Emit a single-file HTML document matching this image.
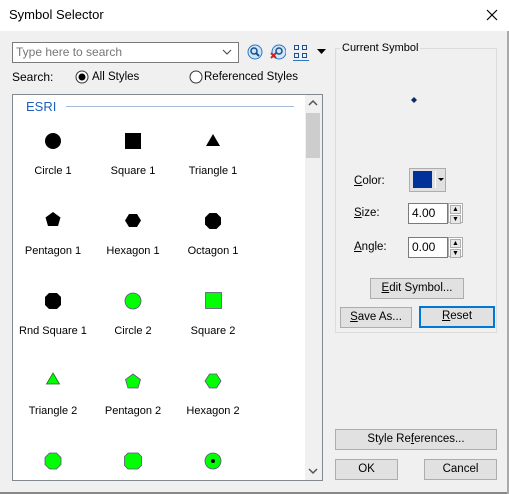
<!DOCTYPE html><html><head><style>
body{margin:0;width:509px;height:494px;background:#f0f0f0;font-family:"Liberation Sans",sans-serif;font-size:11px;color:#000;position:relative;overflow:hidden}
.a{position:absolute}
.btn{position:absolute;background:#e1e1e1;border:1px solid #adadad;box-sizing:border-box;text-align:center;line-height:18px;font-size:11.5px}
.lbl{position:absolute;width:80px;text-align:center;font-size:11px;color:#000}
.inp{position:absolute;background:#fff;border:1px solid #7a7a7a;box-sizing:border-box;padding-left:3px;line-height:18px;font-size:12px}
.spin{position:absolute;width:15px;height:20px;box-sizing:border-box}
.spin div{height:8px;border:1px solid #adadad;background:#e8e8e8;margin-bottom:1px;font-size:7px;line-height:8px;text-align:center}
</style></head><body>
<div class="a" style="left:0;top:0;width:509px;height:31px;background:#fff"></div>
<div class="a" style="left:9px;top:7px;font-size:13px">Symbol Selector</div>
<svg class="a" style="left:486px;top:9px" width="12" height="12"><path d="M1 1L11 11M11 1L1 11" stroke="#000" stroke-width="1.2"/></svg>
<div class="a" style="left:0;top:492px;width:509px;height:2px;background:#888"></div>
<div class="a" style="left:507px;top:31px;width:2px;height:463px;background:#aaa"></div>

<div class="inp" style="left:12px;top:42px;width:227px;height:21px;color:#777;line-height:18px">Type here to search</div>
<svg class="a" style="left:222px;top:48px" width="10" height="8"><path d="M1 2L5 6L9 2" stroke="#444" fill="none"/></svg>
<svg class="a" style="left:247px;top:44px" width="16" height="16"><circle cx="8" cy="8" r="7" fill="#cfe6f8" stroke="#2a77c0"/><circle cx="7" cy="7" r="3" fill="none" stroke="#1b4f8f" stroke-width="1.5"/><path d="M9 9L12 12" stroke="#1b4f8f" stroke-width="2"/></svg>
<svg class="a" style="left:270px;top:44px" width="16" height="16"><circle cx="9" cy="8" r="7" fill="#cfe6f8" stroke="#2a77c0"/><circle cx="9" cy="7" r="3" fill="none" stroke="#1b4f8f" stroke-width="1.5"/><path d="M1 9L6 14M6 9L1 14" stroke="#d02020" stroke-width="2"/></svg>
<svg class="a" style="left:293px;top:44px" width="18" height="18"><g fill="none" stroke="#1b4f8f"><rect x="1.5" y="1.5" width="4" height="4"/><rect x="9.5" y="1.5" width="4" height="4"/><rect x="1.5" y="9.5" width="4" height="4"/><rect x="9.5" y="9.5" width="4" height="4"/></g><path d="M0 16.5H16" stroke="#2a77c0"/></svg>
<svg class="a" style="left:317px;top:49px" width="9" height="6"><path d="M0 0H9L4.5 5Z" fill="#000"/></svg>

<div class="a" style="left:12px;top:70px;font-size:12px">Search:</div>
<svg class="a" style="left:75px;top:70px" width="14" height="14"><circle cx="7" cy="7" r="6" fill="#fff" stroke="#333"/><circle cx="7" cy="7" r="3.5" fill="#000"/></svg>
<div class="a" style="left:92px;top:71px;font-size:11.5px">All Styles</div>
<svg class="a" style="left:189px;top:70px" width="14" height="14"><circle cx="7" cy="7" r="6" fill="#fff" stroke="#333"/></svg>
<div class="a" style="left:204px;top:71px;font-size:11.5px">Referenced Styles</div>

<div class="a" style="left:12px;top:94px;width:311px;height:387px;background:#fff;border:1px solid #828790;box-sizing:border-box"></div>
<div class="a" style="left:305px;top:95px;width:17px;height:385px;background:#f0f0f0"></div>
<div class="a" style="left:306px;top:113px;width:14px;height:45px;background:#cdcdcd"></div>
<svg class="a" style="left:308px;top:99px" width="10" height="8"><path d="M1 6L5 2L9 6" stroke="#555" fill="none" stroke-width="1.5"/></svg>
<svg class="a" style="left:308px;top:467px" width="10" height="8"><path d="M1 2L5 6L9 2" stroke="#555" fill="none" stroke-width="1.5"/></svg>
<div class="a" style="left:26px;top:99px;color:#1f5fbf;font-size:13px">ESRI</div>
<div class="a" style="left:66px;top:106px;width:228px;height:1px;background:#a5bcd8"></div>

<svg class="a" style="left:0;top:0" width="509" height="494">
<circle cx="53" cy="141" r="8"/>
<rect x="125" y="133" width="16" height="16"/>
<path d="M213 134L220 146H206Z"/>
<path d="M53 212L60.5 217.5L58 226H48L45.5 217.5Z"/>
<path d="M129 214H137L141 220.5L137 227H129L125 220.5Z"/>
<path d="M209.5 213H216.5L221 217.5V224.5L216.5 229H209.5L205 224.5V217.5Z"/>
<path d="M49 293H57L61 297V305L57 309H49L45 305V297Z"/>
<g fill="#00ff00" stroke="#6a4a8a" stroke-width="0.8">
<circle cx="133" cy="301" r="8"/>
<rect x="205.5" y="292.5" width="16" height="16"/>
<path d="M53 373L59.5 384H46.5Z" stroke="#1a6a1a"/>
<path d="M133 374L140.5 379.5L138 388H128L125.5 379.5Z"/>
<path d="M209.5 374H216.5L221 381L216.5 388H209.5L205 381Z"/>
<path d="M49.5 453H56.5L61 457.5V464.5L56.5 469H49.5L45 464.5V457.5Z"/>
<path d="M128 453H138L141.5 456.5V465.5L138 469H128L124.5 465.5V456.5Z"/>
<circle cx="213" cy="461" r="8"/>
</g>
<circle cx="213" cy="461" r="2" fill="#000"/>
<path d="M414 97L417 100L414 103L411 100Z" fill="#0a2a6a"/>
</svg>
<div class="lbl" style="left:13px;top:165px">Circle 1</div>
<div class="lbl" style="left:93px;top:165px">Square 1</div>
<div class="lbl" style="left:173px;top:165px">Triangle 1</div>
<div class="lbl" style="left:13px;top:245px">Pentagon 1</div>
<div class="lbl" style="left:93px;top:245px">Hexagon 1</div>
<div class="lbl" style="left:173px;top:245px">Octagon 1</div>
<div class="lbl" style="left:3px;top:325px;width:100px">Rnd Square 1</div>
<div class="lbl" style="left:93px;top:325px">Circle 2</div>
<div class="lbl" style="left:173px;top:325px">Square 2</div>
<div class="lbl" style="left:13px;top:405px">Triangle 2</div>
<div class="lbl" style="left:93px;top:405px">Pentagon 2</div>
<div class="lbl" style="left:173px;top:405px">Hexagon 2</div>

<div class="a" style="left:335px;top:48px;width:162px;height:285px;border:1px solid #dcdcdc;box-sizing:border-box"></div>
<div class="a" style="left:340px;top:42px;background:#f0f0f0;padding:0 2px">Current Symbol</div>

<div class="a" style="left:354px;top:175px;font-size:11.5px"><u>C</u>olor:</div>
<div class="a" style="left:409px;top:168px;width:37px;height:24px;border:1px solid #adadad;background:#e1e1e1;box-sizing:border-box"></div>
<div class="a" style="left:413px;top:171px;width:19px;height:17px;background:#003399"></div>
<div class="a" style="left:435px;top:171px;width:1px;height:17px;background:#fff"></div>
<svg class="a" style="left:438px;top:178px" width="6" height="4"><path d="M0 0H6L3 3Z"/></svg>

<div class="a" style="left:354px;top:207px;font-size:11.5px"><u>S</u>ize:</div>
<div class="inp" style="left:408px;top:203px;width:40px;height:21px">4.00</div>
<div class="spin" style="left:448px;top:203px;border:1px solid #adadad;background:#fff;padding:1px"><div style="height:7px">▲</div><div style="height:7px">▼</div></div>
<div class="a" style="left:354px;top:241px;font-size:11.5px"><u>A</u>ngle:</div>
<div class="inp" style="left:408px;top:237px;width:40px;height:21px">0.00</div>
<div class="spin" style="left:448px;top:237px;border:1px solid #adadad;background:#fff;padding:1px"><div style="height:7px">▲</div><div style="height:7px">▼</div></div>

<div class="btn" style="left:370px;top:278px;width:94px;height:21px"><u>E</u>dit Symbol...</div>
<div class="btn" style="left:340px;top:307px;width:72px;height:21px"><u>S</u>ave As...</div>
<div class="btn" style="left:419px;top:306px;width:76px;height:22px;border:2px solid #0078d7;line-height:17px"><u>R</u>eset</div>
<div class="btn" style="left:335px;top:429px;width:162px;height:21px">Style Re<u>f</u>erences...</div>
<div class="btn" style="left:335px;top:459px;width:63px;height:21px">OK</div>
<div class="btn" style="left:424px;top:459px;width:73px;height:21px">Cancel</div>
</body></html>
